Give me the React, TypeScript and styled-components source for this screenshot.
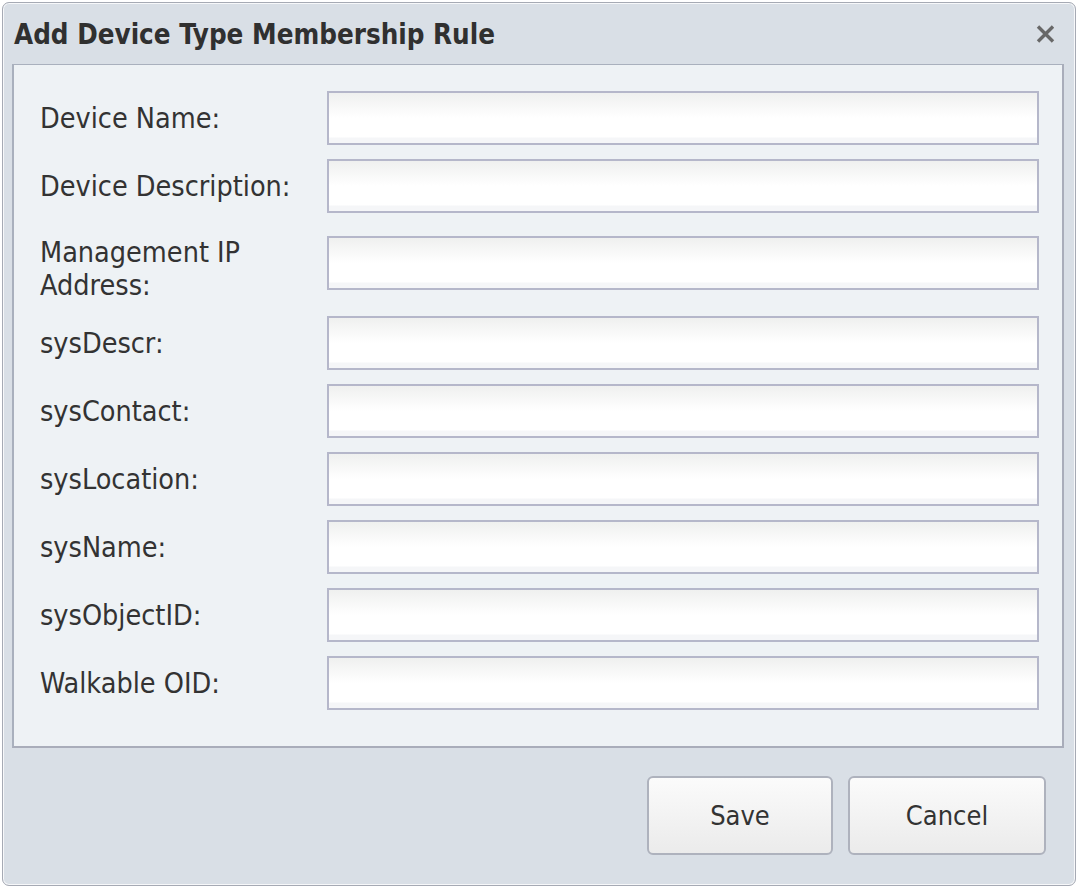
import React from "react";
import styled, { createGlobalStyle } from "styled-components";

const GlobalStyle = createGlobalStyle`
  html, body {
    margin: 0;
    padding: 0;
    background: #ffffff;
  }
  * { box-sizing: border-box; }
`;

const FONT = `"DejaVu Sans Condensed", "DejaVu Sans", Verdana, sans-serif`;

const Window = styled.div`
  margin: 2px;
  width: 1074px;
  height: 884px;
  background: #d9dfe6;
  border: 1px solid #a6aab4;
  border-radius: 7px;
  box-shadow: inset 0 0 0 1px #f7f8fa;
  display: flex;
  flex-direction: column;
  font-family: ${FONT};
  color: #333333;
  overflow: hidden;
`;

const Header = styled.div`
  height: 61px;
  flex: none;
  display: flex;
  align-items: center;
  justify-content: space-between;
  padding: 0 20px 0 11px;
`;

const Title = styled.h1`
  margin: 0;
  font-size: 27.5px;
  font-weight: bold;
  color: #303030;
  letter-spacing: 0;
`;

const CloseButton = styled.button`
  border: none;
  background: transparent;
  padding: 0;
  width: 20px;
  height: 20px;
  display: flex;
  align-items: center;
  justify-content: center;
  cursor: pointer;
`;

const Panel = styled.div`
  margin: 0 11px 0 9px;
  height: 684px;
  flex: none;
  background: #eef2f5;
  border-top: 1px solid #a9b0bd;
  border-left: 2px solid #a9b0bd;
  border-right: 2px solid #a9adba;
  border-bottom: 2px solid #a9adba;
  padding: 26px 23px 0 26px;
`;

const Form = styled.div`
  display: grid;
  grid-template-columns: 287px 1fr;
  row-gap: 14px;
`;

const Label = styled.label<{ $multi?: boolean }>`
  align-self: ${(p) => (p.$multi ? "start" : "center")};
  padding-top: ${(p) => (p.$multi ? "9px" : "0")};
  font-size: 28.5px;
  line-height: 33px;
  color: #333333;
`;

const Input = styled.input<{ $offset?: number }>`
  align-self: start;
  margin-top: ${(p) => p.$offset ?? 0}px;
  height: 54px;
  width: 100%;
  border: 2px solid #b5b7ca;
  background: linear-gradient(to bottom, #eff0ef 0%, #fcfcfc 40%, #ffffff 50%, #ffffff 88%, #f5f6f8 90%, #f5f6f8 100%);
  font-family: ${FONT};
  font-size: 22px;
  padding: 0 8px;
  outline: none;
`;

const Footer = styled.div`
  flex: 1;
  display: flex;
  justify-content: flex-end;
  align-items: flex-start;
  gap: 15px;
  padding: 28px 29px 0 0;
`;

const Button = styled.button<{ $w: number }>`
  width: ${(p) => p.$w}px;
  height: 79px;
  border: 2px solid #aeb2bd;
  border-radius: 6px;
  background: linear-gradient(to bottom, #fbfbfb 0%, #f2f2f2 55%, #ebebeb 100%);
  font-family: ${FONT};
  font-size: 27px;
  color: #333333;
  cursor: pointer;
`;

const fields: { label: string; multi?: boolean }[] = [
  { label: "Device Name:" },
  { label: "Device Description:" },
  { label: "Management IP Address:", multi: true },
  { label: "sysDescr:" },
  { label: "sysContact:" },
  { label: "sysLocation:" },
  { label: "sysName:" },
  { label: "sysObjectID:" },
  { label: "Walkable OID:" },
];

export default function App() {
  return (
    <>
      <GlobalStyle />
      <Window>
        <Header>
          <Title>Add Device Type Membership Rule</Title>
          <CloseButton aria-label="Close">
            <svg width="19" height="18" viewBox="0 0 19 18">
              <path d="M2 1.5 L17 16.5 M17 1.5 L2 16.5" stroke="#686868" strokeWidth="3.4" strokeLinecap="butt" />
            </svg>
          </CloseButton>
        </Header>
        <Panel>
          <Form>
            {fields.map((f) => (
              <React.Fragment key={f.label}>
                <Label $multi={f.multi}>{f.label}</Label>
                <Input type="text" $offset={f.multi ? 9 : 0} />
              </React.Fragment>
            ))}
          </Form>
        </Panel>
        <Footer>
          <Button $w={186}>Save</Button>
          <Button $w={198}>Cancel</Button>
        </Footer>
      </Window>
    </>
  );
}
